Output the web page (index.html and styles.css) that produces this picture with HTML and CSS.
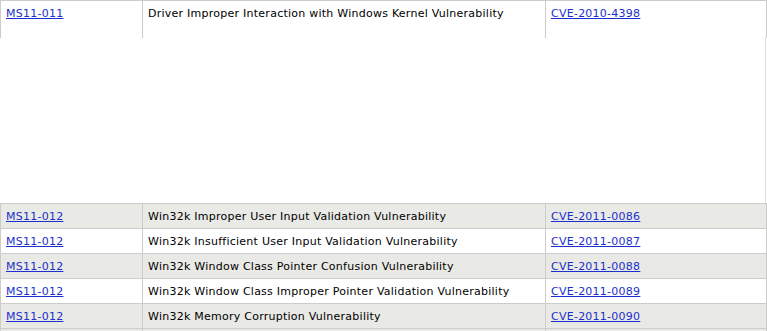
FILE: index.html
```html
<!DOCTYPE html>
<html>
<head>
<meta charset="utf-8">
<link rel="stylesheet" href="styles.css">
</head>
<body>
<div class="page">
  <table class="vt vt-top">
    <colgroup><col class="c1"><col class="c2"><col class="c3"></colgroup>
    <tr>
      <td><a href="#">MS11-011</a></td>
      <td>Driver Improper Interaction with Windows Kernel Vulnerability</td>
      <td><a href="#">CVE-2010-4398</a></td>
    </tr>
  </table>
  <div class="gap"></div>
  <table class="vt">
    <colgroup><col class="c1"><col class="c2"><col class="c3"></colgroup>
    <tr class="alt">
      <td><a href="#">MS11-012</a></td>
      <td>Win32k Improper User Input Validation Vulnerability</td>
      <td><a href="#">CVE-2011-0086</a></td>
    </tr>
    <tr>
      <td><a href="#">MS11-012</a></td>
      <td>Win32k Insufficient User Input Validation Vulnerability</td>
      <td><a href="#">CVE-2011-0087</a></td>
    </tr>
    <tr class="alt">
      <td><a href="#">MS11-012</a></td>
      <td>Win32k Window Class Pointer Confusion Vulnerability</td>
      <td><a href="#">CVE-2011-0088</a></td>
    </tr>
    <tr>
      <td><a href="#">MS11-012</a></td>
      <td>Win32k Window Class Improper Pointer Validation Vulnerability</td>
      <td><a href="#">CVE-2011-0089</a></td>
    </tr>
    <tr class="alt">
      <td><a href="#">MS11-012</a></td>
      <td>Win32k Memory Corruption Vulnerability</td>
      <td><a href="#">CVE-2011-0090</a></td>
    </tr>
    <tr class="alt">
      <td>&nbsp;</td>
      <td>&nbsp;</td>
      <td>&nbsp;</td>
    </tr>
  </table>
</div>
</body>
</html>
```
FILE: styles.css
```css
html, body {
  margin: 0;
  padding: 0;
  background: #ffffff;
}
.page {
  width: 766px;
  font-family: "DejaVu Sans", Verdana, sans-serif;
  font-size: 11px;
  letter-spacing: 0.25px;
  color: #000;
}
.vt {
  width: 766px;
  border-collapse: collapse;
  table-layout: fixed;
}
.c1 { width: 142px; }
.c2 { width: 403px; }
.c3 { width: 221px; }
.vt td {
  border: 1px solid #cccccc;
  padding: 0 5px;
  height: 24px;
  vertical-align: middle;
  white-space: nowrap;
  overflow: hidden;
}
.vt-top td {
  border-bottom: none;
  height: 31px;
  vertical-align: top;
  padding-top: 6px;
}
.alt td {
  background: #e9e9e5;
}
.vt a {
  color: #1a2fcc;
  text-decoration: underline;
}
.gap {
  height: 165px;
  margin-left: 765px;
  width: 1px;
  background: #dddddd;
}
```
